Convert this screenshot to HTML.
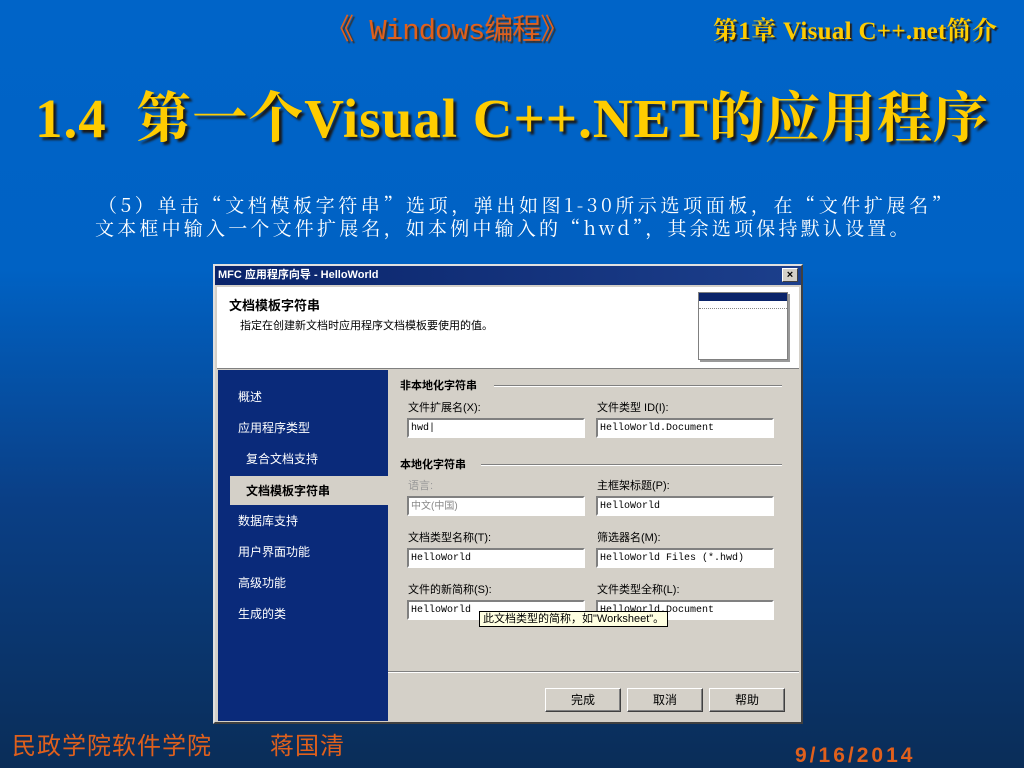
<!DOCTYPE html>
<html><head><meta charset="utf-8"><style>
*{margin:0;padding:0;box-sizing:border-box}
body{width:1024px;height:768px;overflow:hidden;position:relative;background:linear-gradient(#0064c8 0%,#0062c4 35%,#0a3f86 65%,#0a2d58 100%);font-family:"Liberation Serif","Noto Serif CJK SC",serif}
.a{position:absolute;white-space:nowrap}
.s{font-family:"Liberation Sans","Noto Sans CJK SC",sans-serif;font-size:12px;color:#000}
.in{position:absolute;background:#fff;border:2px solid;border-color:#808080 #fff #fff #808080;height:20px;width:176px;padding:1px 2px;font-family:"Liberation Mono",monospace;font-size:10px;line-height:15px}
.btn{position:absolute;top:688px;width:76px;height:24px;background:#d4d0c8;border:1px solid;border-color:#fff #404040 #404040 #fff;box-shadow:inset -1px -1px #808080;text-align:center;line-height:22px}
.nav{position:absolute;left:238px;color:#fff;font-size:12px;font-family:"Liberation Sans","Noto Sans CJK SC",sans-serif}
</style></head><body>
<div class="a" style="left:325px;top:6px;font-size:29px;color:#e0601c;font-family:'Liberation Mono','Noto Sans CJK SC',monospace;text-shadow:2px 2px 1px #333;letter-spacing:-1px">《 Windows编程》</div>
<div class="a" style="left:713px;top:11px;font-size:25px;color:#ffcc00;font-weight:bold;text-shadow:2px 2px 1px #222;letter-spacing:0.3px">第1章 Visual C++.net简介</div>
<div class="a" style="left:35px;top:74px;font-size:55px;color:#ffcc00;font-weight:bold;text-shadow:3px 3px 2px #1a1a1a;letter-spacing:1px">1.4&nbsp; 第一个Visual C++.NET的应用程序</div>
<div class="a" style="left:98px;top:193px;font-size:19px;color:#fff;line-height:23px;font-family:'Noto Serif CJK SC',serif;letter-spacing:3.6px" lang="zh-CN">（5）单击“文档模板字符串”选项，弹出如图1-30所示选项面板，在“文件扩展名”<br><span style="margin-left:-3px;letter-spacing:3.2px">文本框中输入一个文件扩展名，如本例中输入的“hwd”，其余选项保持默认设置。</span></div>

<div class="a" style="left:213px;top:264px;width:590px;height:460px;background:#d4d0c8;border:2px solid;border-color:#e0e0e0 #404040 #404040 #e0e0e0"></div>
<div class="a" style="left:215px;top:266px;width:586px;height:19px;background:linear-gradient(90deg,#0a246a,#1c3f8c);color:#fff;font-size:11px;font-weight:bold;font-family:'Liberation Sans','Noto Sans CJK SC',sans-serif;line-height:19px;padding-left:3px">MFC 应用程序向导 - HelloWorld</div>
<div class="a" style="left:782px;top:268px;width:16px;height:14px;background:#d4d0c8;border:1px solid;border-color:#fff #404040 #404040 #fff;font:bold 11px 'Liberation Sans';text-align:center;line-height:12px">×</div>
<div class="a" style="left:217px;top:287px;width:582px;height:82px;background:#fff;border-bottom:1px solid #808080"></div>
<div class="a s" style="left:229px;top:295px;font-size:13px;font-weight:bold">文档模板字符串</div>
<div class="a s" style="left:240px;top:317px;font-size:11px">指定在创建新文档时应用程序文档模板要使用的值。</div>
<div class="a" style="left:698px;top:292px;width:90px;height:68px;background:#fff;border:1px solid #808080;box-shadow:2px 2px #999"><div style="height:8px;background:#0a246a"></div><div style="height:6px;margin-top:2px;border-bottom:1px dotted #888"></div></div>
<div class="a" style="left:218px;top:370px;width:170px;height:351px;background:#0a2a7a"></div>
<div class="a" style="left:230px;top:476px;width:158px;height:29px;background:#d4d0c8"></div>
<div class="nav" style="top:388px">概述</div>
<div class="nav" style="top:419px">应用程序类型</div>
<div class="nav" style="top:450px;left:246px">复合文档支持</div>
<div class="nav" style="top:482px;left:246px;color:#000;font-weight:bold">文档模板字符串</div>
<div class="nav" style="top:512px">数据库支持</div>
<div class="nav" style="top:543px">用户界面功能</div>
<div class="nav" style="top:574px">高级功能</div>
<div class="nav" style="top:605px">生成的类</div>

<div class="a s" style="left:400px;top:377px;font-weight:bold;font-size:11px">非本地化字符串</div>
<div class="a" style="left:494px;top:385px;width:288px;border-top:1px solid #808080;border-bottom:1px solid #fff"></div>
<div class="a s" style="left:408px;top:399px;font-size:11px">文件扩展名(X):</div>
<div class="a s" style="left:597px;top:399px;font-size:11px">文件类型 ID(I):</div>
<div class="in" style="left:407px;top:418px;width:178px">hwd|</div>
<div class="in" style="left:596px;top:418px;width:178px">HelloWorld.Document</div>
<div class="a s" style="left:400px;top:456px;font-weight:bold;font-size:11px">本地化字符串</div>
<div class="a" style="left:481px;top:464px;width:301px;border-top:1px solid #808080;border-bottom:1px solid #fff"></div>
<div class="a s" style="left:408px;top:477px;font-size:11px;color:#999">语言:</div>
<div class="a s" style="left:597px;top:477px;font-size:11px">主框架标题(P):</div>
<div class="in" style="left:407px;top:496px;width:178px;color:#888;font-family:'Liberation Sans','Noto Sans CJK SC'">中文(中国)</div>
<div class="in" style="left:596px;top:496px;width:178px">HelloWorld</div>
<div class="a s" style="left:408px;top:529px;font-size:11px">文档类型名称(T):</div>
<div class="a s" style="left:597px;top:529px;font-size:11px">筛选器名(M):</div>
<div class="in" style="left:407px;top:548px;width:178px">HelloWorld</div>
<div class="in" style="left:596px;top:548px;width:178px">HelloWorld Files (*.hwd)</div>
<div class="a s" style="left:408px;top:581px;font-size:11px">文件的新简称(S):</div>
<div class="a s" style="left:597px;top:581px;font-size:11px">文件类型全称(L):</div>
<div class="in" style="left:407px;top:600px;width:178px">HelloWorld</div>
<div class="in" style="left:596px;top:600px;width:178px">HelloWorld.Document</div>
<div class="a s" style="left:479px;top:611px;height:16px;background:#ffffe1;border:1px solid #000;font-size:11px;padding:0 3px;line-height:14px">此文档类型的简称，如"Worksheet"。</div>
<div class="a" style="left:388px;top:671px;width:411px;border-top:1px solid #808080;border-bottom:1px solid #fff"></div>
<div class="btn s" style="left:545px">完成</div>
<div class="btn s" style="left:627px">取消</div>
<div class="btn s" style="left:709px">帮助</div>

<div class="a" style="left:12px;top:726px;font-size:24px;color:#e0601c;font-family:'Liberation Sans','Noto Sans CJK SC',sans-serif;letter-spacing:1px">民政学院软件学院</div>
<div class="a" style="left:270px;top:726px;font-size:24px;color:#e0601c;font-family:'Liberation Sans','Noto Sans CJK SC',sans-serif;letter-spacing:1px">蒋国清</div>
<div class="a" style="left:795px;top:744px;font:bold 21px 'Liberation Sans',sans-serif;color:#e0601c;letter-spacing:3px">9/16/2014</div>
</body></html>
